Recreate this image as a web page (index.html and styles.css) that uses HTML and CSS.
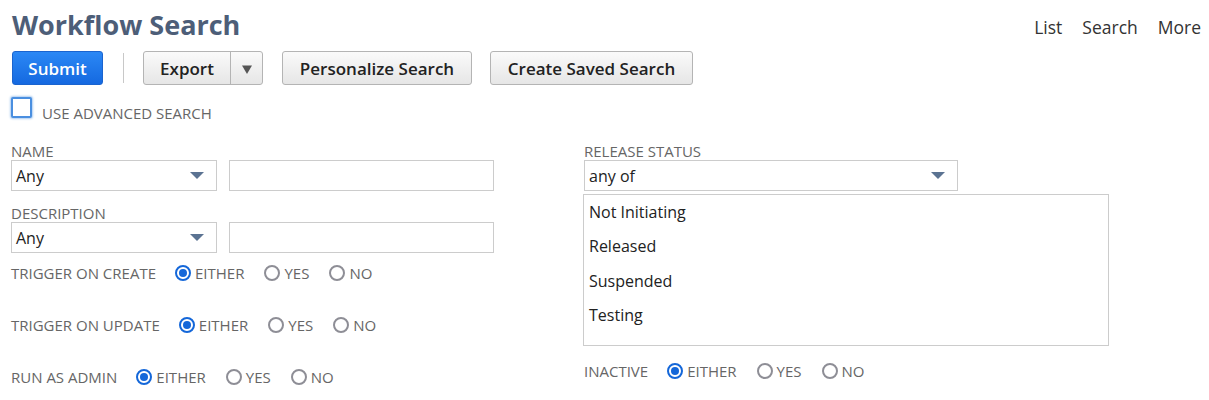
FILE: index.html
```html
<!DOCTYPE html>
<html lang="en">
<head>
<meta charset="utf-8">
<title>Workflow Search</title>
<link rel="stylesheet" href="styles.css">
</head>
<body>
<div class="page">
  <header class="header">
    <h1 class="title">Workflow Search</h1>
    <nav class="links">
      <a href="#">List</a>
      <a href="#">Search</a>
      <a href="#">More</a>
    </nav>
  </header>

  <div class="toolbar">
    <button class="btn btn-primary">Submit</button>
    <span class="sep"></span>
    <div class="btn btn-split">
      <span class="split-main">Export</span>
      <span class="split-arrow"><svg width="10" height="10" viewBox="0 0 10 10"><path d="M0 1.5 H10 L5 10 Z" fill="#555"/></svg></span>
    </div>
    <button class="btn btn-pers">Personalize Search</button>
    <button class="btn btn-save">Create Saved Search</button>
  </div>

  <label class="adv">
    <span class="checkbox"></span>
    <span class="adv-text">USE ADVANCED SEARCH</span>
  </label>

  <div class="form">
    <div class="col col-left">
      <div class="field">
        <div class="label">NAME</div>
        <div class="pair">
          <div class="select sel-small"><span>Any</span><i class="caret"></i></div>
          <div class="textbox"></div>
        </div>
      </div>
      <div class="field field-desc">
        <div class="label">DESCRIPTION</div>
        <div class="pair">
          <div class="select sel-small"><span>Any</span><i class="caret"></i></div>
          <div class="textbox"></div>
        </div>
      </div>
      <div class="radio-row row-create">
        <span class="rlabel">TRIGGER ON CREATE</span>
        <span class="opt"><i class="radio on"></i>EITHER</span>
        <span class="opt"><i class="radio"></i>YES</span>
        <span class="opt"><i class="radio"></i>NO</span>
      </div>
      <div class="radio-row row-next">
        <span class="rlabel">TRIGGER ON UPDATE</span>
        <span class="opt"><i class="radio on"></i>EITHER</span>
        <span class="opt"><i class="radio"></i>YES</span>
        <span class="opt"><i class="radio"></i>NO</span>
      </div>
      <div class="radio-row row-next">
        <span class="rlabel">RUN AS ADMIN</span>
        <span class="opt"><i class="radio on"></i>EITHER</span>
        <span class="opt"><i class="radio"></i>YES</span>
        <span class="opt"><i class="radio"></i>NO</span>
      </div>
    </div>

    <div class="col col-right">
      <div class="field">
        <div class="label">RELEASE STATUS</div>
        <div class="select sel-wide"><span>any of</span><i class="caret"></i></div>
        <ul class="listbox">
          <li>Not Initiating</li>
          <li>Released</li>
          <li>Suspended</li>
          <li>Testing</li>
        </ul>
      </div>
      <div class="radio-row row-inactive">
        <span class="rlabel">INACTIVE</span>
        <span class="opt"><i class="radio on"></i>EITHER</span>
        <span class="opt"><i class="radio"></i>YES</span>
        <span class="opt"><i class="radio"></i>NO</span>
      </div>
    </div>
  </div>
</div>
</body>
</html>
```

FILE: styles.css
```css
* { box-sizing: border-box; }

html, body {
  margin: 0;
  padding: 0;
  background: #fff;
}

body {
  font-family: "Open Sans", "Liberation Sans", sans-serif;
  color: #222;
}

.page {
  padding: 7px 8px 0 11px;
}

.header {
  display: flex;
  justify-content: space-between;
  align-items: center;
  height: 34px;
}

.title {
  margin: 1px 0 0 1px;
  font-size: 27px;
  line-height: 34px;
  font-weight: 700;
  color: #4d5e78;
}

.links {
  display: flex;
  gap: 20px;
  font-size: 17.5px;
  line-height: 24px;
  margin-top: 6px;
}

.links a {
  color: #333;
  text-decoration: none;
}

.toolbar {
  display: flex;
  align-items: center;
  margin-top: 10px;
  height: 34px;
}

.btn {
  height: 34px;
  padding: 0;
  border: 1px solid #b4b4b4;
  border-radius: 3px;
  background: linear-gradient(#fafafa, #e6e6e6);
  font-family: "Open Sans", "Liberation Sans", sans-serif;
  font-size: 17px;
  font-weight: 600;
  color: #222;
  margin-right: 20px;
  display: flex;
  align-items: center;
  justify-content: center;
}

.btn-primary {
  margin-left: 1px;
  width: 91px;
  color: #fff;
  border-color: #1a64cf;
  background: linear-gradient(#2b88f5, #1569e0);
}

.sep {
  width: 1px;
  height: 30px;
  background: #c8c8c8;
  margin-right: 19px;
}

.btn-split {
  width: 120px;
}

.split-main {
  width: 87px;
  text-align: center;
  border-right: 1px solid #b4b4b4;
  height: 100%;
  display: flex;
  align-items: center;
  justify-content: center;
}

.split-arrow {
  flex: 1;
  display: flex;
  align-items: center;
  justify-content: center;
  padding-top: 1px;
}

.btn-pers { width: 190px; margin-left: -1px; }
.btn-save { width: 203px; margin-left: -2px; }

.adv {
  display: flex;
  align-items: center;
  margin-top: 12px;
  height: 21px;
}

.checkbox {
  width: 21px;
  height: 21px;
  border: 2px solid #4a8fe0;
  border-radius: 2px;
  background: #fff;
  box-shadow: 0 0 2px 1px rgba(74, 143, 224, 0.45);
}

.adv-text {
  margin-left: 10px;
  font-size: 15px;
  color: #666;
  padding-top: 10px;
}

.form {
  display: grid;
  grid-template-columns: 573px 1fr;
  margin-top: 24px;
}

.label {
  font-size: 15px;
  line-height: 18px;
  color: #666;
}

.field-desc {
  margin-top: 13px;
}

.pair {
  display: flex;
  gap: 12px;
}

.select {
  height: 31px;
  border: 1px solid #cccccc;
  display: flex;
  align-items: center;
  justify-content: space-between;
  padding: 0 12px 0 4px;
  font-size: 16px;
  color: #222;
}

.sel-small { width: 206px; }
.sel-wide { width: 374px; }

.caret {
  width: 0;
  height: 0;
  border-left: 7px solid transparent;
  border-right: 7px solid transparent;
  border-top: 7px solid #5b7392;
}

.textbox {
  width: 265px;
  height: 31px;
  border: 1px solid #cccccc;
}

.listbox {
  list-style: none;
  margin: 3px 0 0 -1px;
  padding: 0 5px;
  width: 526px;
  height: 152px;
  border: 1px solid #cccccc;
  font-size: 16px;
  color: #222;
}

.listbox li {
  line-height: 34.4px;
}

.radio-row {
  display: flex;
  align-items: center;
  font-size: 15px;
  line-height: 18px;
  color: #666;
}

.row-create { margin-top: 11px; }
.row-next { margin-top: 34px; }
.row-inactive { margin-top: 16px; }

.rlabel {
  margin-right: 19px;
}

.opt {
  display: flex;
  align-items: center;
  margin-right: 20px;
}

.radio {
  width: 16px;
  height: 16px;
  border: 2px solid #8e8e96;
  border-radius: 50%;
  margin-right: 4px;
  background: #fff;
  position: relative;
}

.radio.on {
  border-color: #1467d9;
}

.radio.on::after {
  content: "";
  position: absolute;
  left: 2px;
  top: 2px;
  width: 8px;
  height: 8px;
  border-radius: 50%;
  background: #1467d9;
}
```
